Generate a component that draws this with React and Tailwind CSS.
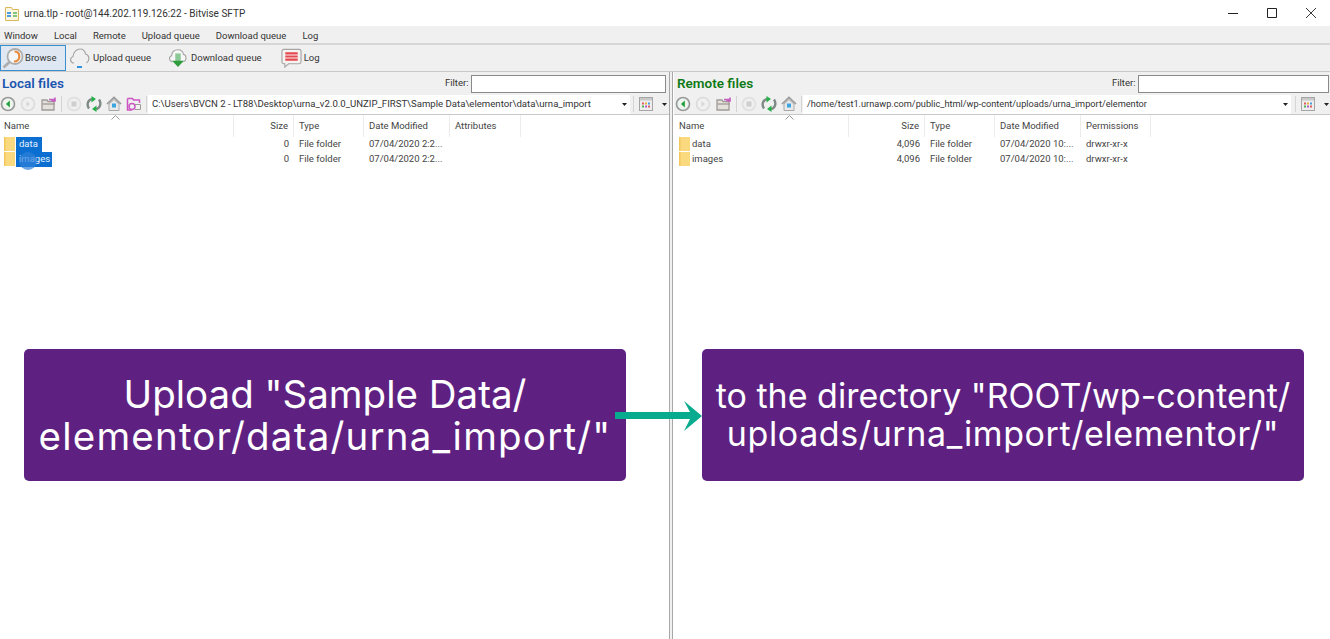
import React from 'react';

const Caret = () => (
  <svg width="5" height="3" viewBox="0 0 5 3" className="shrink-0"><path d="M0 0h5L2.500 3z" fill="#222" /></svg>
);

const Folder = () => (
  <svg width="12" height="15" viewBox="0 0 12 15" className="shrink-0">
    <path d="M0 1c0-.5.500-1 1-1h10v14H0z" fill="#fbd97f" />
    <path d="M0 1c0-.5.500-1 1-1h.5v14H0z" fill="#f3c75e" />
  </svg>
);

const CircleBtn = ({ active }) => (
  <svg width="16" height="16" viewBox="0 0 16 16" className="shrink-0">
    <circle cx="8" cy="8" r="6.500" fill={active ? '#eef5ee' : '#f0f0f0'} stroke={active ? '#9a9a9a' : '#dcdcdc'} strokeWidth="1.700" />
    {active ? <path d="M9.800 4.500 6 8l3.800 3.500z" fill="#1f9e35" /> : <path d="M6.500 5 10 8l-3.500 3z" fill="#d8d8d8" />}
  </svg>
);

const OpenFolderIcon = () => (
  <svg width="16" height="16" viewBox="0 0 16 16" className="ml-[1px] shrink-0">
    <path d="M1 4h5l1 1.500h6V14H1z" fill="#e4e0dc" stroke="#a09a96" strokeWidth="1.300" />
    <path d="M1.500 8h12.500" stroke="#a09a96" strokeWidth="1.300" />
    <path d="M8 3.500h5l1.500 1.500M14 1.500V5h-3.500" fill="none" stroke="#c65bc0" strokeWidth="1.600" />
  </svg>
);

const StopBtn = () => (
  <svg width="16" height="16" viewBox="0 0 16 16" className="shrink-0">
    <circle cx="8" cy="8" r="6.500" fill="#efefef" stroke="#dedede" strokeWidth="1.500" />
    <rect x="5.500" y="5.500" width="5" height="5" fill="#cfcfcf" />
  </svg>
);

const RefreshIcon = () => (
  <svg width="16" height="16" viewBox="0 0 16 16" className="shrink-0">
    <path d="M3 12.500C.5 9 1.500 4 6 2.800" fill="none" stroke="#7f8a86" strokeWidth="2.400" />
    <path d="M5.500 0 10 3 5.500 6.500z" fill="#25b04a" />
    <path d="M13 3.500c2.500 3.500 1.500 8.500-3 9.700" fill="none" stroke="#7f8a86" strokeWidth="2.400" />
    <path d="M10.500 9.500 6 13l4.500 3z" fill="#25b04a" />
  </svg>
);

const HomeIcon = () => (
  <svg width="16" height="16" viewBox="0 0 16 16" className="shrink-0">
    <path d="M1 8 8 1.500 15 8" fill="none" stroke="#9a9a9a" strokeWidth="1.700" />
    <path d="M3 8v6.500h10V8L8 3.500z" fill="#e9e9e9" stroke="#a8a8a8" />
    <rect x="6" y="7.500" width="4" height="4" fill="#3aa6e0" />
  </svg>
);

const BookmarkIcon = () => (
  <svg width="16" height="16" viewBox="0 0 16 16" className="shrink-0">
    <path d="M1.500 2.500h5l1 1.500h6v3M1.500 2.500V14H6" fill="none" stroke="#cc55c4" strokeWidth="1.500" />
    <circle cx="6" cy="10.500" r="3" fill="none" stroke="#cc55c4" strokeWidth="1.500" />
    <path d="M9 8.500h5.500v5H9" fill="none" stroke="#a09a96" />
  </svg>
);

const ViewIcon = () => (
  <svg width="14" height="14" viewBox="0 0 14 14" className="shrink-0">
    <rect x=".5" y=".5" width="13" height="13" fill="#eee" stroke="#a5a5a5" />
    <path d="M1 1h12v2.500H1z" fill="#c9c9c9" />
    <path d="M3 5.500h2v2H3z" fill="#e35d5d" />
    <path d="M6 5.500h2v2H6z" fill="#e8b13c" />
    <path d="M9 5.500h2v2H9z" fill="#4a9be0" />
    <path d="M3 8.500h2v2H3z" fill="#52b45a" />
    <path d="M6 8.500h2v2H6z" fill="#b35ed0" />
    <path d="M9 8.500h2v2H9z" fill="#e35d5d" />
  </svg>
);

const NavRow = ({ path, bookmark, iconsClass, pathWidth, pathText, trailClass }) => (
  <div className="flex h-[20px] items-center">
    <div className={`flex shrink-0 items-center gap-[4px] ${iconsClass}`}>
      <CircleBtn active />
      <CircleBtn />
      <OpenFolderIcon />
      <div className="h-4 w-px bg-[#d4d4d4]" />
      <StopBtn />
      <RefreshIcon />
      <HomeIcon />
      {bookmark && <BookmarkIcon />}
      <div className="ml-auto mr-[1px] h-4 w-px bg-[#d4d4d4]" />
    </div>
    <div className={`flex h-[19px] shrink-0 ${pathWidth} items-center justify-between bg-white pl-[4px] pr-[3px] ${pathText} text-[#333]`}>
      <span className="whitespace-nowrap">{path}</span>
      <Caret />
    </div>
    <div className={`flex items-center ${trailClass}`}>
      <div className="h-4 w-px bg-[#d4d4d4]" />
      <div className="ml-[5px]"><ViewIcon /></div>
      <div className="ml-[9px]"><Caret /></div>
    </div>
  </div>
);

const FilePane = ({ title, titleColor, titleClass, paneClass, filterClass, namePad, columns, rows, selected, nav }) => (
  <div className={`flex shrink-0 flex-col ${paneClass}`}>
    <div className={`flex h-[22px] items-center justify-between bg-[#f0f0f0] pt-[1px] ${titleClass}`}>
      <span className={`text-[13.500px] font-semibold ${titleColor}`}>{title}</span>
      <div className={`flex items-center gap-[2px] text-[9.500px] text-[#333] ${filterClass}`}>
        <span>Filter:</span>
        <div className="h-[18px] flex-1 border border-[#8a8a8a] bg-white" />
      </div>
    </div>
    <div className="bg-[#f0f0f0]">
      <NavRow {...nav} />
    </div>
    <div className="relative flex-1 border-t border-[#c8c8c8] bg-white text-[9.500px] text-[#444]">
      <svg width="9" height="5" viewBox="0 0 9 5" className="absolute left-[111px] top-0">
        <path d="M.5 4.500 4.500.5l4 4" fill="none" stroke="#999" />
      </svg>
      <div className="flex">
        {columns.map((c, i) => (
          <div key={c.label} className={`flex h-[22px] shrink-0 items-center border-r border-[#ececec] pr-[5px] ${c.width} ${c.right ? 'justify-end' : ''} ${i === 0 ? namePad : 'pl-[5px]'}`}>
            {c.label}
          </div>
        ))}
      </div>
      <div>
        {rows.map((row, i) => (
          <div key={row[0]} className="flex">
            <div className={`flex h-[15px] shrink-0 items-center ${columns[0].width} ${namePad}`}>
              <div className="relative flex h-[15px] items-center">
                <Folder />
                {selected ? (
                  <span className={`relative z-10 h-[15px] bg-[#0b6fd1] pl-[3px] text-[#e8f2fc] ${i === 0 ? 'w-[26px]' : 'w-[36px]'}`}>{row[0]}</span>
                ) : (
                  <span className="pl-[1px]">{row[0]}</span>
                )}
                {selected && i === 1 && (
                  <div className="absolute left-[15px] top-0 z-20 h-[18px] w-[18px] rounded-full bg-[#2f80d8]/70" />
                )}
              </div>
            </div>
            {row.slice(1).map((v, j) => (
              <div key={j} className={`flex h-[15px] shrink-0 items-center whitespace-nowrap pl-[5px] pr-[5px] ${columns[j + 1].width} ${columns[j + 1].right ? 'justify-end' : ''}`}>{v}</div>
            ))}
          </div>
        ))}
      </div>
    </div>
  </div>
);

const localCols = [
  { label: 'Name', width: 'w-[234px]' },
  { label: 'Size', width: 'w-[60px]', right: true },
  { label: 'Type', width: 'w-[70px]' },
  { label: 'Date Modified', width: 'w-[86px]' },
  { label: 'Attributes', width: 'w-[71px]' },
];

const remoteCols = [
  { label: 'Name', width: 'w-[175px]' },
  { label: 'Size', width: 'w-[76px]', right: true },
  { label: 'Type', width: 'w-[70px]' },
  { label: 'Date Modified', width: 'w-[86px]' },
  { label: 'Permissions', width: 'w-[70px]' },
];

const Menu = ['Window', 'Local', 'Remote', 'Upload queue', 'Download queue', 'Log'];

export default function App() {
  return (
    <div className="relative flex h-[639px] w-[1330px] flex-col overflow-hidden bg-white font-['Roboto',sans-serif]">
      {/* Title bar */}
      <div className="flex h-[26px] items-center justify-between bg-white pl-[5px] pr-[14px]">
        <div className="flex items-center gap-[5px] pt-[1px] text-[10px] text-[#333]">
          <svg width="14" height="14" viewBox="0 0 14 14">
            <path d="M.5.500h6l1 2h6v11H.5z" fill="#fdf6e0" stroke="#d8b95e" />
            <path d="M2 5h4v2H2zM2 8h4v2H2z" fill="#4a9be0" />
            <path d="M8 5h4v2H8zM8 8h4v2H8z" fill="#7fc47f" />
          </svg>
          <span>urna.tlp - root@144.202.119.126:22 - Bitvise SFTP</span>
        </div>
        <div className="flex items-center gap-[29px]">
          <svg width="10" height="10" viewBox="0 0 10 10"><path d="M0 5.500h10" stroke="#222" /></svg>
          <svg width="10" height="10" viewBox="0 0 10 10"><path d="M.5.500h9v9h-9z" fill="none" stroke="#222" /></svg>
          <svg width="10" height="10" viewBox="0 0 10 10"><path d="M0 0l10 10M10 0 0 10" stroke="#222" strokeWidth=".9" /></svg>
        </div>
      </div>

      {/* Menu */}
      <div className="flex h-[17px] items-center gap-[16px] bg-[#f0f0f0] pl-[4px] pt-[3px] text-[9.500px] text-[#333]">
        {Menu.map((m) => <span key={m}>{m}</span>)}
      </div>
      <div className="h-[2px] bg-[#d6d6d6]" />

      {/* Toolbar */}
      <div className="flex h-[26px] items-center bg-[#f0f0f0] text-[9.500px] text-[#333]">
        <div className="flex h-[26px] w-[66px] items-center gap-[1px] border border-[#3a8fd0] bg-[#dfe8f2] pl-[1px]">
          <svg width="22" height="22" viewBox="0 0 22 22">
            <circle cx="13" cy="9.500" r="7.500" fill="#f4f6f8" stroke="#adadad" strokeWidth="1.800" />
            <path d="M12.500 4.500c3.500 0 4.800 2.500 4.800 5s-2 5-5.300 5" fill="none" stroke="#ea8a3c" strokeWidth="2.200" />
            <path d="M1.500 20.500 7.500 15" stroke="#adadad" strokeWidth="2.800" />
          </svg>
          <span>Browse</span>
        </div>
        <div className="ml-[3px] flex items-center gap-[3px]">
          <svg width="21" height="22" viewBox="0 0 21 22">
            <path d="M5 16C1.500 16 0 11 4 9.500 4.500 4.500 8 2 11 2c3 0 5 2 5.500 5 3.500.5 5 6 1 9" fill="none" stroke="#a5a5a5" strokeWidth="1.200" />
            <path d="M8 20h5" stroke="#2f93e0" strokeWidth="2" />
          </svg>
          <span>Upload queue</span>
        </div>
        <div className="ml-[17px] flex items-center gap-[3px]">
          <svg width="20" height="22" viewBox="0 0 22 22">
            <path d="M5 15C1 15 .5 9.500 4 8.500 4 4 7 2 11 2c3 0 5.500 2 6 5 3.500.5 4 6.500 0 8" fill="#f7f7f7" stroke="#a5a5a5" strokeWidth="1.200" />
            <path d="M8 6h6v9H8z" fill="#8ac896" />
            <path d="M4.500 14h13L11 21z" fill="#2f9c3d" />
          </svg>
          <span>Download queue</span>
        </div>
        <div className="ml-[19px] flex items-center gap-[2px]">
          <svg width="21" height="22" viewBox="0 0 22 22">
            <path d="M3 2h16a2 2 0 0 1 2 2v11a2 2 0 0 1-2 2H8l-4 3.500V17H3a2 2 0 0 1-2-2V4a2 2 0 0 1 2-2z" fill="#f6f2f0" stroke="#a5a5a5" strokeWidth="1.200" />
            <path d="M4.500 5h13v2.300h-13zM4.500 8.300h13v2.300h-13zM4.500 11.600h13v2.300h-13z" fill="#e5484d" />
          </svg>
          <span>Log</span>
        </div>
      </div>
      <div className="h-[1px] bg-[#c9c9c9]" />

      {/* Panes */}
      <div className="flex flex-1">
        <FilePane
          title="Local files"
          titleColor="text-[#1a55b0]"
          titleClass="pl-[2px]"
          paneClass="w-[669px]"
          filterClass="w-[224px] pr-[3px]"
          namePad="pl-[4px]"
          columns={localCols}
          selected
          nav={{
            path: 'C:\\Users\\BVCN 2 - LT88\\Desktop\\urna_v2.0.0_UNZIP_FIRST\\Sample Data\\elementor\\data\\urna_import',
            bookmark: true,
            iconsClass: 'w-[148px]',
            pathWidth: 'w-[482px]',
            pathText: 'text-[9.600px]',
            trailClass: 'ml-[3px]',
          }}
          rows={[
            ['data', '0', 'File folder', '07/04/2020 2:2...', ''],
            ['images', '0', 'File folder', '07/04/2020 2:2...', ''],
          ]}
        />
        <div className="flex w-[4px] shrink-0 justify-between bg-[#f0f0f0]">
          <div className="w-px bg-[#a8a8a8]" />
          <div className="w-px bg-[#a8a8a8]" />
        </div>
        <FilePane
          title="Remote files"
          titleColor="text-[#0f7a16]"
          titleClass="pl-[3px]"
          paneClass="w-[657px] pl-[1px]"
          filterClass="w-[218px] pr-[1px]"
          namePad="pl-[5px]"
          columns={remoteCols}
          nav={{
            path: '/home/test1.urnawp.com/public_html/wp-content/uploads/urna_import/elementor',
            iconsClass: 'w-[129px] pl-[1px]',
            pathWidth: 'w-[488px]',
            pathText: 'text-[9.200px]',
            trailClass: 'ml-[4px]',
          }}
          rows={[
            ['data', '4,096', 'File folder', '07/04/2020 10:...', 'drwxr-xr-x'],
            ['images', '4,096', 'File folder', '07/04/2020 10:...', 'drwxr-xr-x'],
          ]}
        />
      </div>

      {/* Callouts over the window */}
      <div className="absolute left-[24px] top-[349px] flex h-[132px] w-[602px] flex-col items-center justify-center rounded-[5px] bg-[#5e2181] text-center font-['Inter',sans-serif] text-[38.500px] leading-[42px] text-white">
        <span>Upload "Sample Data/</span>
        <span className="tracking-[1.2px]">elementor/data/urna_import/"</span>
      </div>
      <div className="absolute left-[702px] top-[349px] flex h-[132px] w-[602px] flex-col items-center justify-center rounded-[5px] bg-[#5e2181] text-center font-['Inter',sans-serif] text-[34px] leading-[38px] text-white">
        <span>to the directory "ROOT/wp-content/</span>
        <span className="tracking-[0.6px]">uploads/urna_import/elementor/"</span>
      </div>
      <svg width="90" height="32" viewBox="0 0 90 32" className="absolute left-[614px] top-[400px]">
        <path d="M1 12h75L70 1l18 15-18 15 6-12H1z" fill="#08ab8d" />
      </svg>
    </div>
  );
}
